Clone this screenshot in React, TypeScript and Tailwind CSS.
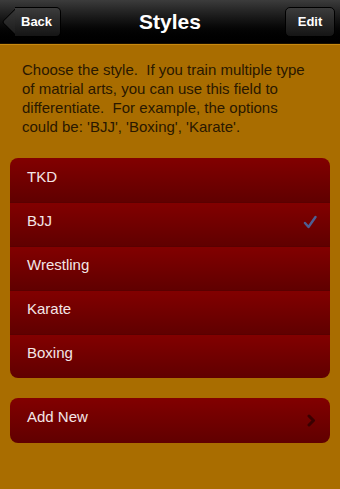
import React from 'react';

const styles = ['TKD', 'BJJ', 'Wrestling', 'Karate', 'Boxing'];

function Check() {
  return (
    <svg width="14" height="14" viewBox="0 0 14 14" className="shrink-0">
      <path d="M2 8 L5.5 12 L12.5 2" fill="none" stroke="#4d5e93" strokeWidth="2.4" strokeLinecap="round" strokeLinejoin="round" />
    </svg>
  );
}

function Chevron() {
  return (
    <svg width="9" height="13" viewBox="0 0 9 13" className="shrink-0">
      <path d="M2 2 L6.5 6.5 L2 11" fill="none" stroke="#3a0000" strokeWidth="3" strokeLinecap="round" strokeLinejoin="round" />
    </svg>
  );
}

export default function App() {
  const selected = 'BJJ';

  return (
    <div
      className="w-[340px] h-[489px] overflow-hidden bg-[#a96d00] flex flex-col"
      style={{ fontFamily: '"Liberation Sans", Arial, sans-serif' }}
    >
      {/* Nav bar */}
      <div className="h-[44px] shrink-0 flex items-center justify-between px-[5px] bg-gradient-to-b from-[#3c3c3c] via-[#111111] to-[#000000] border-b border-[#1a1000] relative">
        <div className="relative h-[30px] flex items-center">
          <div className="absolute left-[1px] top-[4px] w-[22px] h-[22px] rotate-45 rounded-[3px] bg-gradient-to-br from-[#3a3a3a] to-[#1a1a1a] border-l border-b border-[#000]" />
          <div className="relative ml-[10px] h-[30px] pl-[6px] pr-[8px] flex items-center rounded-r-[5px] bg-gradient-to-b from-[#3c3c3c] to-[#151515] border border-l-0 border-[#000] text-white text-[13px] font-bold">
            Back
          </div>
        </div>
        <div className="absolute left-0 right-0 top-0 h-[44px] flex items-center justify-center pointer-events-none">
          <span className="text-white text-[21px] font-bold">Styles</span>
        </div>
        <div className="h-[30px] w-[50px] flex items-center justify-center rounded-[5px] bg-gradient-to-b from-[#3c3c3c] to-[#151515] border border-[#000] text-white text-[13px] font-bold">
          Edit
        </div>
      </div>
      <div className="h-[1px] bg-[#c98a10] shrink-0" />

      {/* Description */}
      <p className="pl-[22px] pr-[28px] pt-[15px] text-[15px] leading-[19px] text-[#2a1800]">
        Choose the style.&nbsp; If you train multiple type of matrial arts, you can use this field to differentiate.&nbsp; For example, the options could be: 'BJJ', 'Boxing', 'Karate'.
      </p>

      {/* Styles list */}
      <div className="mx-[10px] mt-[22px] rounded-[8px] overflow-hidden flex flex-col">
        {styles.map((s, i) => (
          <div
            key={s}
            className={`h-[44px] flex items-center justify-between pl-[17px] pr-[13px] pb-[6px] bg-gradient-to-b from-[#820000] to-[#600000] ${
              i > 0 ? 'border-t border-[#5a0000]' : ''
            }`}
          >
            <span className="text-[15px] text-[#f3e6e6]">{s}</span>
            {s === selected && <Check />}
          </div>
        ))}
      </div>

      {/* Add new */}
      <div className="mx-[10px] mt-[20px] h-[45px] rounded-[8px] flex items-center justify-between pl-[17px] pr-[14px] bg-gradient-to-b from-[#820000] to-[#600000]">
        <span className="text-[15px] text-[#f3e6e6] pb-[6px]">Add New</span>
        <Chevron />
      </div>
    </div>
  );
}
